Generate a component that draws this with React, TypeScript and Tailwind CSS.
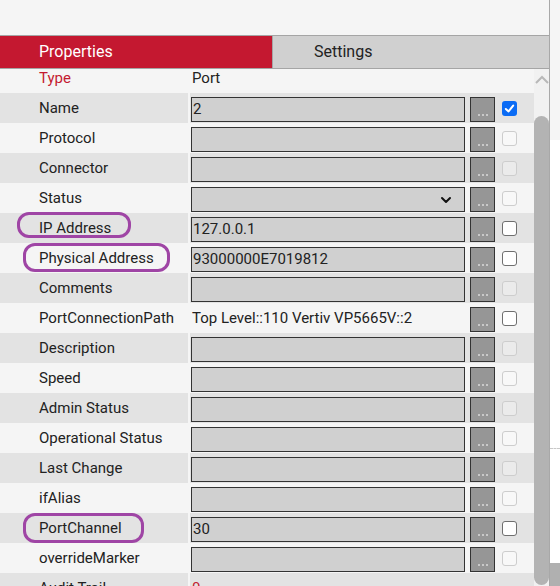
import { ChevronDown } from 'lucide-react'

type Row = {
  label: string
  kind: 'text' | 'input' | 'select'
  value?: string
  check?: 'checked' | 'enabled' | 'disabled' | 'none'
  button?: boolean
  red?: boolean
  mark?: { left: number; top: number; w: number; h: number }
  valueRed?: boolean
}

const rows: Row[] = [
  { label: 'Type', kind: 'text', value: 'Port', check: 'none', button: false, red: true },
  { label: 'Name', kind: 'input', value: '2', check: 'checked' },
  { label: 'Protocol', kind: 'input', check: 'disabled' },
  { label: 'Connector', kind: 'input', check: 'disabled' },
  { label: 'Status', kind: 'select', check: 'disabled' },
  { label: 'IP Address', kind: 'input', value: '127.0.0.1', check: 'enabled', mark: { left: 17, top: -1, w: 114, h: 26 } },
  { label: 'Physical Address', kind: 'input', value: '93000000E7019812', check: 'enabled', mark: { left: 23, top: 0, w: 147, h: 29 } },
  { label: 'Comments', kind: 'input', check: 'disabled' },
  { label: 'PortConnectionPath', kind: 'text', value: 'Top Level::110 Vertiv VP5665V::2', check: 'enabled' },
  { label: 'Description', kind: 'input', check: 'disabled' },
  { label: 'Speed', kind: 'input', check: 'disabled' },
  { label: 'Admin Status', kind: 'input', check: 'disabled' },
  { label: 'Operational Status', kind: 'input', check: 'disabled' },
  { label: 'Last Change', kind: 'input', check: 'disabled' },
  { label: 'ifAlias', kind: 'input', check: 'disabled' },
  { label: 'PortChannel', kind: 'input', value: '30', check: 'enabled', mark: { left: 23, top: 0, w: 121, h: 30 } },
  { label: 'overrideMarker', kind: 'input', check: 'disabled' },
  { label: 'Audit Trail', kind: 'text', value: '0', check: 'none', button: false, valueRed: true },
]

function Checkbox({ state }: { state: Row['check'] }) {
  if (state === 'none') return null
  if (state === 'checked') {
    return (
      <div className="w-[15px] h-[15px] rounded-[3px] bg-[#0b6cf5] flex items-center justify-center">
        <svg width="11" height="11" viewBox="0 0 12 12">
          <path d="M2 6.5 L5 9.2 L10 2.8" fill="none" stroke="#fff" strokeWidth="2.2" strokeLinecap="round" strokeLinejoin="round" />
        </svg>
      </div>
    )
  }
  if (state === 'enabled') {
    return <div className="w-[15px] h-[15px] rounded-[3px] bg-white border border-[#6f6f6f]" />
  }
  return <div className="w-[15px] h-[15px] rounded-[3px] bg-white/30 border border-[#cdcdcd]" />
}

function DotsButton() {
  return (
    <div className="w-[25px] h-[25px] mt-[3px] bg-[#969696] border border-[#333] flex items-end justify-center pb-[5px]">
      <div className="flex gap-[2px]">
        <span className="w-[2px] h-[2px] bg-[#c9c9c9]" />
        <span className="w-[2px] h-[2px] bg-[#c9c9c9]" />
        <span className="w-[2px] h-[2px] bg-[#c9c9c9]" />
      </div>
    </div>
  )
}

function PropRow({ row, index }: { row: Row; index: number }) {
  const dark = index % 2 === 1
  return (
    <div className={`relative h-[30px] shrink-0 flex items-center ${dark ? 'bg-[#e3e3e3]' : 'bg-[#f5f5f5]'} ${index === 0 ? '-mt-[6px]' : ''}`}>
      <div className={`w-[190px] h-full pl-[39px] flex items-center border-r-2 border-[#f5f5f5] ${row.red ? 'text-[#c41a30]' : 'text-[#222]'}`}>
        {row.label}
      </div>
      {row.mark && (
        <div
          className="absolute z-10 border-[3px] border-[#9f45a5] rounded-[12px] pointer-events-none"
          style={{ left: row.mark.left, top: row.mark.top, width: row.mark.w, height: row.mark.h }}
        />
      )}
      <div className="pl-px flex items-center">
        {row.kind === 'text' && (
          <div className={`w-[274px] pl-[1px] ${row.valueRed ? 'text-[#c41a30]' : 'text-[#222]'}`}>{row.value}</div>
        )}
        {row.kind === 'input' && (
          <div className="w-[274px] h-[25px] mt-[3px] bg-[#d0d0d0] border border-[#333] pl-[1px] flex items-center text-[#222]">
            {row.value}
          </div>
        )}
        {row.kind === 'select' && (
          <div className="w-[274px] h-[25px] mt-[3px] bg-[#d0d0d0] border border-[#333] flex items-center justify-end pr-[10px]">
            <ChevronDown size={16} strokeWidth={3} color="#111" />
          </div>
        )}
      </div>
      {row.button !== false && (
        <div className="ml-[5px]">
          <DotsButton />
        </div>
      )}
      <div className="ml-[7px]">
        <Checkbox state={row.check} />
      </div>
    </div>
  )
}

export default function App() {
  return (
    <div className="w-[560px] h-[586px] overflow-hidden flex bg-[#f5f5f5] text-[15px]" style={{ fontFamily: 'Roboto, "Noto Sans", sans-serif' }}>
      <div className="w-[550px] h-full flex flex-col border-r border-[#a8a8a8]">
        <div className="h-[35px] shrink-0" />
        <div className="h-[34px] shrink-0 flex border-y border-[#a5a5a5] text-[16px]">
          <div className="w-[272px] bg-[#c41830] text-white pl-[39px] flex items-center">Properties</div>
          <div className="flex-1 bg-[#d0d0d0] border-l border-[#a5a5a5] text-[#222] pl-[41px] flex items-center">Settings</div>
        </div>
        <div className="flex-1 flex overflow-hidden">
          <div className="w-[534px] flex flex-col">
            {rows.map((row, i) => (
              <PropRow key={row.label} row={row} index={i} />
            ))}
          </div>
          <div className="w-[15px] bg-[#f1f1f1] flex flex-col">
            <div className="h-[18px] flex items-center justify-center pt-[2px]">
              <svg width="14" height="9" viewBox="0 0 14 9">
                <path d="M1 8 L7 2 L13 8" fill="none" stroke="#b8b8b8" strokeWidth="2" />
              </svg>
            </div>
            <div className="h-[29px]" />
            <div className="flex-1 mb-px bg-[#b3b3b3] rounded-full" />
          </div>
        </div>
      </div>
      <div className="flex-1 flex flex-col">
        <div className="h-[140px] bg-[#f5f5f5]" />
        <div className="flex-1 bg-white flex flex-col">
          <div className="mt-[308px] border-t border-dashed border-[#c8c8c8]" />
          <div className="flex-1" />
          <div className="h-[23px] bg-[#b0b0b0]" />
        </div>
      </div>
    </div>
  )
}
